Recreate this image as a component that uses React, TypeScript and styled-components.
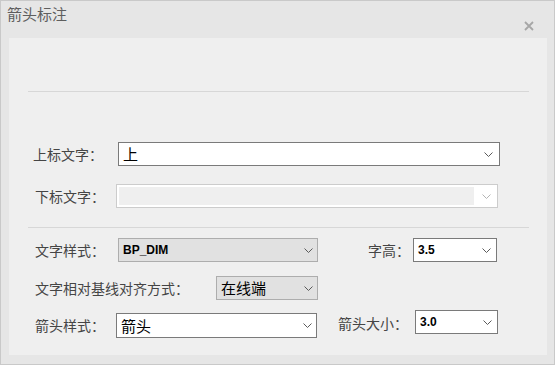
import React from "react";
import styled, { createGlobalStyle } from "styled-components";

const Global = createGlobalStyle`
  html, body { margin: 0; padding: 0; background: #e6e6e6; }
  * { box-sizing: border-box; }
`;

const cjk = `"Noto Sans CJK SC", "Noto Sans", sans-serif`;

const Window = styled.div`
  width: 555px;
  height: 365px;
  border: 1px solid #c9c9c9;
  background: #e6e6e6;
  display: flex;
  flex-direction: column;
  font-family: ${cjk};
`;

const TitleBar = styled.div`
  height: 37px;
  display: flex;
  align-items: flex-start;
  justify-content: space-between;
  padding: 5px 0 0 6px;
`;

const Title = styled.div`
  font-size: 15px;
  line-height: 16px;
  color: #5e5e5e;
`;

const Close = styled.button`
  border: none;
  background: none;
  padding: 0;
  margin: 15px 20px 0 0;
  width: 10px;
  height: 10px;
  display: flex;
  cursor: pointer;
`;

const Panel = styled.div`
  flex: 1;
  margin: 0 7px 9px 8px;
  background: #efefef;
  padding-top: 53px;
  display: flex;
  flex-direction: column;
`;

const Separator = styled.div<{ $mt?: number }>`
  height: 1px;
  background: #d7d7d7;
  margin: ${(p) => p.$mt ?? 0}px 18px 0 19px;
`;

const Row = styled.div<{ $mt: number; $pl: number; $align?: string }>`
  display: flex;
  align-items: ${(p) => p.$align ?? "center"};
  margin-top: ${(p) => p.$mt}px;
  padding-left: ${(p) => p.$pl}px;
`;

const Label = styled.div<{ $w: number; $ml?: number; $mt?: number }>`
  width: ${(p) => p.$w}px;
  margin-left: ${(p) => p.$ml ?? 0}px;
  margin-top: ${(p) => p.$mt ?? 0}px;
  font-size: 14px;
  line-height: 16px;
  color: #454545;
  white-space: nowrap;
`;

type Variant = "edit" | "disabled" | "list";

const Box = styled.div<{ $w: number; $h?: number; $v: Variant; $mt?: number }>`
  width: ${(p) => p.$w}px;
  height: ${(p) => p.$h ?? 24}px;
  margin-top: ${(p) => p.$mt ?? 0}px;
  border: 1px solid
    ${(p) => (p.$v === "edit" ? "#7a7a7a" : p.$v === "disabled" ? "#cccccc" : "#adadad")};
  background: ${(p) => (p.$v === "list" ? "#e1e1e1" : "#ffffff")};
  display: flex;
  align-items: center;
  padding: ${(p) => (p.$v === "disabled" ? "2px 0 2px 2px" : "0 0 0 4px")};
`;

const DisabledField = styled.div`
  flex: 1;
  align-self: stretch;
  background: #efefef;
`;

const Value = styled.div<{ $latin?: boolean }>`
  flex: 1;
  color: #000;
  white-space: nowrap;
  font-family: ${(p) => (p.$latin ? `"Liberation Sans", Arial, sans-serif` : cjk)};
  font-size: ${(p) => (p.$latin ? "12px" : "15px")};
  font-weight: ${(p) => (p.$latin ? 700 : 400)};
  line-height: 16px;
`;

const Arrow = styled.div<{ $pr: number; $w: number }>`
  width: ${(p) => p.$w}px;
  display: flex;
  justify-content: flex-end;
  padding-right: ${(p) => p.$pr}px;
`;

const Chevron: React.FC<{ color?: string }> = ({ color = "#5a5a5a" }) => (
  <svg width="9" height="5" viewBox="0 0 9 5">
    <polyline points="0.5,0.5 4.5,4.5 8.5,0.5" fill="none" stroke={color} strokeWidth="1" />
  </svg>
);

const Combo: React.FC<{
  w: number;
  h?: number;
  mt?: number;
  v: Variant;
  text?: string;
  latin?: boolean;
  pr?: number;
}> = ({ w, h, mt, v, text, latin, pr = 6 }) => (
  <Box $w={w} $h={h} $v={v} $mt={mt}>
    {v === "disabled" ? <DisabledField /> : <Value $latin={latin}>{text}</Value>}
    <Arrow $w={v === "disabled" ? 23 : 20} $pr={pr}>
      <Chevron color={v === "disabled" ? "#b4b4b4" : "#5a5a5a"} />
    </Arrow>
  </Box>
);

export default function App() {
  return (
    <>
      <Global />
      <Window>
        <TitleBar>
          <Title>箭头标注</Title>
          <Close aria-label="close">
            <svg width="10" height="10" viewBox="0 0 10 10">
              <path d="M1 1 L9 9 M9 1 L1 9" stroke="#a6a6a6" strokeWidth="1.8" />
            </svg>
          </Close>
        </TitleBar>
        <Panel>
          <Separator />
          <Row $mt={50} $pl={24}>
            <Label $w={85}>上标文字：</Label>
            <Combo w={382} v="edit" text="上" pr={6} />
          </Row>
          <Row $mt={18} $pl={26}>
            <Label $w={81}>下标文字：</Label>
            <Combo w={382} v="disabled" pr={6} />
          </Row>
          <Separator $mt={19} />
          <Row $mt={10} $pl={26}>
            <Label $w={83}>文字样式：</Label>
            <Combo w={200} v="list" text="BP_DIM" latin pr={4} />
            <Label $w={45} $ml={50}>字高：</Label>
            <Combo w={84} v="edit" text="3.5" latin pr={5} />
          </Row>
          <Row $mt={14} $pl={26}>
            <Label $w={181}>文字相对基线对齐方式：</Label>
            <Combo w={102} v="list" text="在线端" pr={4} />
          </Row>
          <Row $mt={10} $pl={26} $align="flex-start">
            <Label $w={81} $mt={7}>箭头样式：</Label>
            <Combo w={201} h={25} mt={3} v="edit" text="箭头" pr={4} />
            <Label $w={77} $ml={21} $mt={5}>箭头大小：</Label>
            <Combo w={83} v="edit" text="3.0" latin pr={5} />
          </Row>
        </Panel>
      </Window>
    </>
  );
}
